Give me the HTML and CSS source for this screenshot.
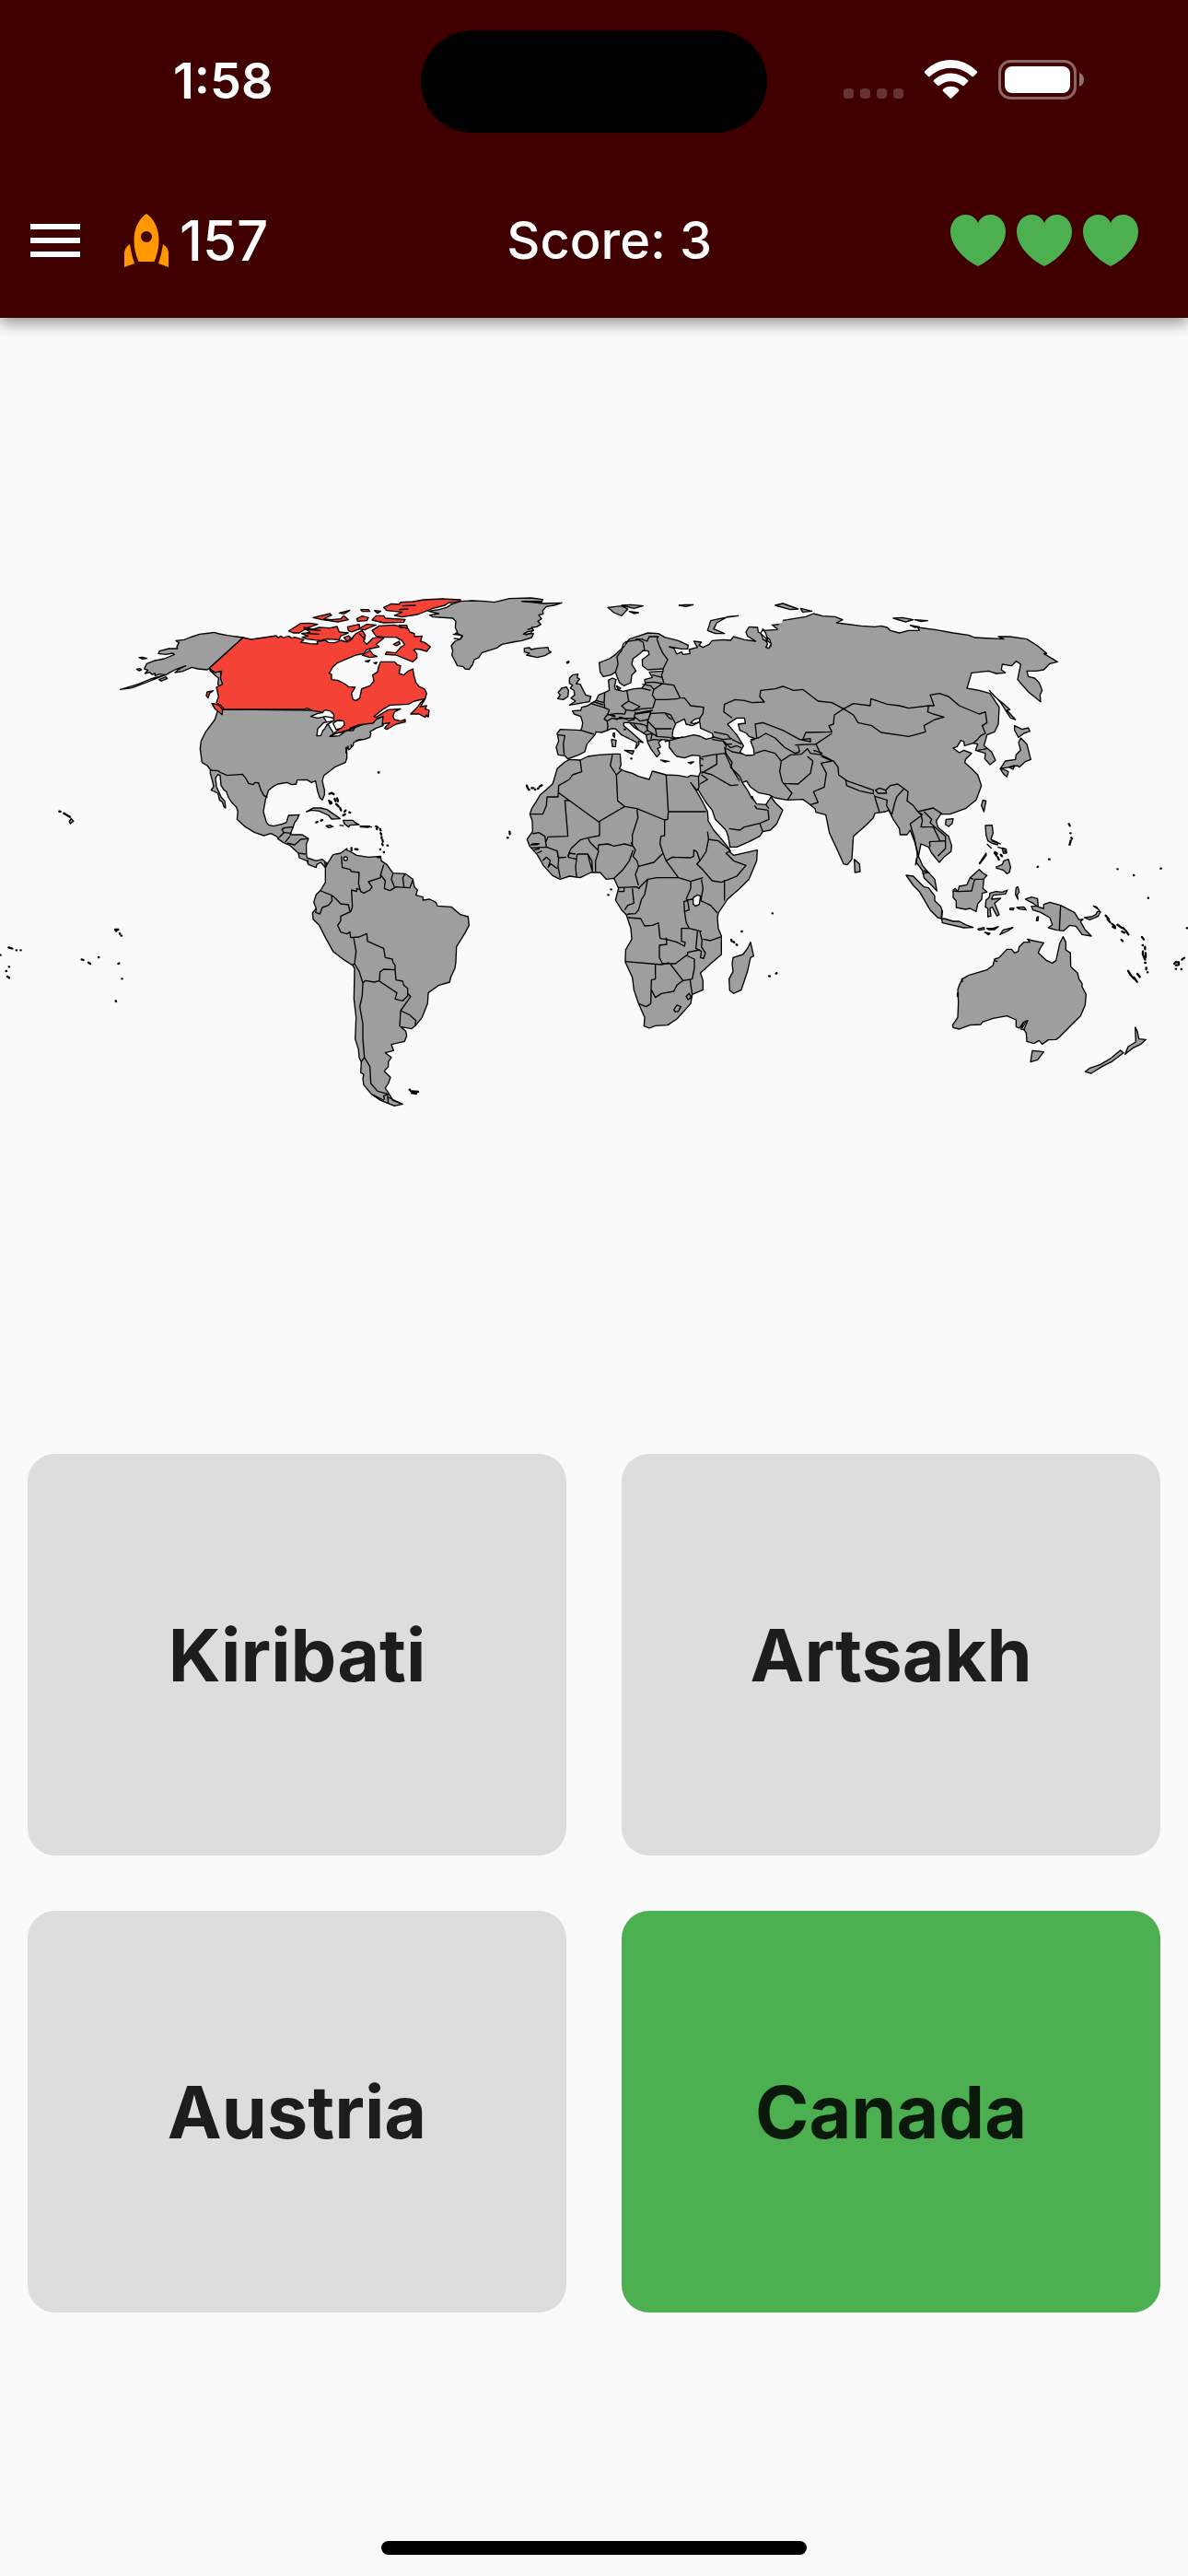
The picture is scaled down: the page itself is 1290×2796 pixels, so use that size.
FILE: index.html
```html
<!DOCTYPE html>
<html lang="en">
<head>
    <meta charset="UTF-8">
    <meta name="viewport" content="width=device-width, initial-scale=1.0">
    <title>Country Quiz</title>
    <link rel="stylesheet" href="styles.css">
</head>
<body>
    <header class="header">
        <div class="status-bar">
            <div class="time">1:58</div>
            <div class="island"></div>
            <div class="status-icons">
                <svg width="262" height="44" viewBox="0 0 262 44">
                    <g fill="#fff" fill-opacity="0.2">
                        <rect x="0" y="31" width="11" height="11" rx="4"/>
                        <rect x="18" y="31" width="11" height="11" rx="4"/>
                        <rect x="36" y="31" width="11" height="11" rx="4"/>
                        <rect x="54" y="31" width="11" height="11" rx="4"/>
                    </g>
                    <g fill="#fff">
                        <path d="M88 12.500Q100.500 0 116.500 0T145 12.500Q145.500 13.300 145 14L141 18Q140 18.600 139.400 18Q129 8.800 116.500 8.800T93.600 18Q93 18.600 92 18L88 14Q87.500 13.300 88 12.500Z"/>
                        <path d="M98 22Q106 14.500 116.500 14.500T135 22Q135.600 23 135 23.700L130.700 28Q130 28.700 129.200 28Q123.500 23.300 116.500 23.300T103.800 28Q103 28.700 102.300 28L98 23.700Q97.400 23 98 22Z"/>
                        <path d="M108 32Q111.500 28.800 116.500 28.800T125 32Q125.800 33 125 34L117.300 41.600Q116.500 42.300 115.700 41.600L108 34Q107.200 33 108 32Z"/>
                    </g>
                    <rect x="169.500" y="1.500" width="82" height="40" rx="12" fill="none" stroke="#fff" stroke-opacity="0.4" stroke-width="3"/>
                    <rect x="175" y="7" width="71" height="29" rx="8" fill="#fff"/>
                    <path d="M256 14Q261 16 261 21.500T256 29Z" fill="#fff" fill-opacity="0.45"/>
                </svg>
            </div>
        </div>
        <div class="toolbar">
            <div class="toolbar-left">
                <button class="menu-button" aria-label="Menu">
                    <svg width="54" height="36" viewBox="0 0 54 36" fill="#fff">
                        <path d="M0 0H54V6H0ZM0 15H54V21H0ZM0 30H54V36H0Z"/>
                    </svg>
                </button>
                <svg class="rocket" width="48" height="58" viewBox="0 0 48 58" fill="#ff9800">
                    <path fill-rule="evenodd" d="M24 0C33 6 37.500 17 37.500 29C37.500 37 35.500 45 32.500 52H15.500C12.500 45 10.500 37 10.500 29C10.500 17 15 6 24 0ZM24 19A6 6 0 1 0 24 31A6 6 0 1 0 24 19Z"/>
                    <path d="M6 33Q7.500 44 11 54L0 58V42Q1 36 6 33ZM42 33Q40.500 44 37 54L48 58V42Q47 36 42 33Z"/>
                </svg>
                <span class="points">157</span>
            </div>
            <div class="score">Score: 3</div>
            <div class="hearts">
                <svg width="60" height="56" viewBox="0 0 60 56"><path d="M30 9C32 4 37 0 43.500 0C53 0 60 8 60 18C60 34 45 48 32 55Q30 56.500 28 55C15 48 0 34 0 18C0 8 7 0 16.500 0C23 0 28 4 30 9Z"/></svg>
                <svg width="60" height="56" viewBox="0 0 60 56"><path d="M30 9C32 4 37 0 43.500 0C53 0 60 8 60 18C60 34 45 48 32 55Q30 56.500 28 55C15 48 0 34 0 18C0 8 7 0 16.500 0C23 0 28 4 30 9Z"/></svg>
                <svg width="60" height="56" viewBox="0 0 60 56"><path d="M30 9C32 4 37 0 43.500 0C53 0 60 8 60 18C60 34 45 48 32 55Q30 56.500 28 55C15 48 0 34 0 18C0 8 7 0 16.500 0C23 0 28 4 30 9Z"/></svg>
            </div>
        </div>
    </header>

    <main class="map-container">
        <svg class="map" viewBox="0 644 1290 604" role="img" aria-label="World map">
            <!-- North America -->
            <g transform="translate(100 630) scale(0.33333)">
                <path class="land" d="M492 183L470 180 440 176 415 171 397 166 385 168 350 172 318 183 300 190 273 193 283 200 276 212 278 219 250 219 220 227 216 235 240 238 263 234 268 238 250 246 235 252 205 258 178 268 170 285 182 289 172 300 188 296 195 303 206 300 205 308 220 302 240 305 255 296 270 288 305 275 280 288 270 297 295 293 325 280 345 285 375 288 382 283Z"/>
                <path class="land" d="M240 304L190 318 150 335 92 352 130 347 175 330 215 314ZM218 320L240 311 245 316 225 325ZM153 248L165 247 178 251 165 253ZM145 286L155 284 161 288 152 291Z"/>
                <path class="land" d="M382 283L395 295 418 293 422 315 428 335 415 345 410 335 412 315 400 305 385 292Z"/>
                <path class="land" d="M408 425L400 450 370 490 355 520 352 545 358 590 375 600 385 612 385 625 392 650 396 668 388 680 410 690 415 712 424 718 430 735 435 738 432 715 420 702 415 690 405 668 402 640 410 629 417 632 420 665 430 680 437 684 445 705 455 720 470 735 475 750 472 775 500 800 530 818 560 828 582 821 600 830 610 840 630 825 620 805 655 800 660 785 668 775 675 760 640 762 633 785 620 790 590 797 575 793 568 785 558 750 565 710 575 680 590 668 605 660 635 655 650 662 665 660 668 647 700 646 715 655 728 650 735 685 742 705 750 712 757 695 757 680 750 650 755 632 775 617 790 605 825 590 830 575 830 560 828 540 838 548 850 535 852 525 870 515 885 515 905 508 908 495 905 490 925 478 948 470 948 440 900 460 790 500 740 420 430 417Z"/>
                <path class="line" d="M385 615L412 617 415 621 440 632 490 628 500 640 510 658 525 662 530 655 542 656 550 680 560 698 572 703M828 540L827 560M833 535L835 550M843 531L845 541M858 520L885 514"/>
                <path class="canada" d="M492 183L518 189 560 183 600 177 606 184 615 178 622 184 640 178 650 185 660 182 690 190 680 198 710 203 735 204 733 196 760 192 770 199 790 200 810 192 830 198 845 190 852 178 860 170 880 160 890 175 885 195 895 205 915 185 935 182 950 185 925 205 935 213 895 222 885 235 860 240 835 250 800 265 785 278 772 300 780 303 780 320 800 322 825 335 835 343 857 345 845 365 850 385 860 388 872 380 878 350 905 340 918 325 914 305 930 295 933 278 940 262 985 262 995 272 1005 275 1000 300 1015 305 1030 292 1045 285 1048 305 1055 330 1065 342 1082 350 1090 365 1085 382 1050 390 1030 400 970 403 950 415 918 440 925 442 945 430 965 418 1005 415 985 425 980 440 985 450 1005 455 1020 450 1020 458 990 465 960 482 953 478 970 460 945 465 948 440 930 445 915 462 870 467 840 478 850 484 820 487 795 503 775 505 800 485 820 468 818 455 800 452 790 458 785 445 745 425 720 422 700 413 690 417 430 417 420 405 405 395 412 375 405 345 425 335 418 315 422 292 400 297 382 283Z"/>
                <path class="canada" d="M1085 382L1070 395 1062 407 1038 432 1065 432 1085 443 1090 435 1095 442 1098 420 1085 415 1090 405 1070 408ZM390 397L412 402 425 418 424 434 400 415ZM375 360L395 356 383 364 378 380 372 372ZM690 150L720 156 740 150 775 152 798 147 805 165 835 168 810 178 805 190 760 188 745 193 700 188 684 182 704 178 682 170 710 166ZM640 162L680 137 710 136 735 140 700 152 675 168 655 168ZM720 118L775 105 780 110 755 122 780 125 810 122 820 112 835 125 800 132 750 125ZM805 103L840 94 820 106ZM875 92L900 92 905 98 880 98ZM920 95L940 97 930 104ZM862 122L880 113 900 118 895 128 865 130ZM925 112L950 112 955 120 1020 124 1015 133 950 135 912 126ZM950 85L975 73 1000 75 1005 68 1045 66 1080 60 1140 57 1200 60 1200 66 1160 70 1150 78 1110 88 1060 108 1010 116 985 111 1010 100 960 95ZM832 148L870 140 872 155 845 165 835 160ZM868 155L895 140 925 142 905 150 888 158ZM912 160L935 145 985 142 1030 155 1035 165 1050 170 1050 180 1075 178 1070 195 1085 200 1102 213 1090 228 1070 222 1055 220 1048 224 1058 235 1058 250 1045 262 1015 250 990 240 955 238 960 230 990 233 1005 215 1018 207 1010 193 990 182 955 182 925 178ZM880 240L905 225 915 238 928 245 905 248ZM890 260L905 257 900 263ZM918 265L928 264 924 269ZM1000 143L1025 143 1028 152 1003 150ZM820 183L835 177 845 185 830 195ZM982 205L1000 195 1003 203 992 210Z"/>
                <path class="line" d="M690 156L745 160M1010 80L1055 78M1000 92L1030 90M870 170L890 190M700 170L740 172"/>
                <path class="sea" d="M712 440L735 430 750 428 758 419 775 422 787 432 788 445 760 440 735 445ZM732 503L735 480 755 460 785 455 765 467 758 480 752 485 745 503ZM785 462L800 453 820 455 822 468 812 478 795 483ZM775 505L795 495 825 489 805 503ZM830 485L855 478 850 486Z"/>
                <path class="land" d="M698 750L720 738 745 738 765 743 790 760 808 773 780 774 770 762 740 748 715 745ZM818 778L850 778 855 784 870 792 840 794 836 800 822 790ZM762 796L775 794 785 799 770 802ZM806 794L820 796M873 797L905 797 900 801 875 800ZM912 800l-8 0"/>
                <path class="dots" d="M773 692l8-3 6 4M772 714l4 10M778 718l2 4M790 708l3 8M795 725l8 8M798 706l3 10M808 738l3 8M818 762l6-4M822 750l4-4M838 752l3 1M730 785l4-2M746 779l4-2M925 798l6 3M927 806l1 1M938 806l2 5M940 820l2 4M943 832l0 4M946 842l1 6M945 855l2 4M962 860h1M938 873h1M950 882h1M933 622h1"/>
            </g>

            <!-- Greenland and Iceland -->
            <g transform="translate(300 630) scale(0.33333)">
                <path class="land" d="M495 97L530 92 555 85 570 75 600 65 640 63 680 65 710 68 760 56 830 54 868 59 865 66 800 65 870 72 930 70 905 78 880 82 868 95 870 105 855 110 864 122 852 130 862 140 848 148 832 150 838 160 815 165 805 172 838 170 832 183 800 193 770 198 735 205 718 217 670 232 660 248 645 255 640 270 628 287 615 285 608 277 590 275 585 265 572 240 575 225 570 210 582 195 600 188 607 178 590 170 580 173 590 165 583 150 585 130 575 120 510 116 500 110 530 105Z"/>
                <path class="line" d="M575 172L605 176 600 188 578 186M800 65L865 67M812 175L830 168 836 158M818 157L835 152"/>
                <path class="land" d="M808 218L825 216 830 222 850 218 885 215 888 226 895 230 875 242 850 248 815 240 825 234 808 230Z"/>
                <path class="dots" d="M948 264l4-2M333 622h1"/>
            </g>

            <!-- Europe and Asia -->
            <g transform="translate(560 640) scale(0.33333)">
                <path class="land" d="M870 98L885 108 835 112 855 127 805 130 810 145 828 160 832 180 820 188 822 170 805 158 800 140 790 135 788 120 760 118 750 135 755 148 782 165 745 160 710 150 700 162 675 160 640 163 630 175 610 185 597 178 605 168 580 165 592 185 565 192 568 205 545 208 540 200 525 207 515 188 500 183 540 190 560 190 562 178 530 163 485 152 465 140 430 138 400 148 370 158 355 180 325 208 305 222 272 235 275 265 285 280 310 275 325 265 330 280 338 300 352 310 375 300 378 275 392 262 378 240 382 222 405 205 415 195 432 197 435 208 412 225 413 245 430 258 480 255 480 262 435 265 445 283 420 290 422 305 410 318 385 320 350 328 325 322 322 310 327 290 315 285 302 292 305 325 290 332 270 340 262 358 245 368 235 375 215 380 212 390 185 392 190 402 212 410 218 430 216 445 212 455 145 452 135 465 140 490 132 510 138 535 160 538 170 548 205 535 225 525 232 500 258 470 262 460 280 462 300 455 310 450 325 450 345 470 395 495 390 515 402 500 400 490 415 495 395 478 375 460 352 440 352 430 370 430 385 445 425 470 430 495 440 515 460 542 470 530 462 515 472 510 465 495 475 485 500 488 500 510 515 530 525 540 550 545 575 536 600 538 600 560 602 590 592 615 592 645 620 690 640 715 650 745 685 780"/>
                <path class="fill" d="M860 105L878 105 698 770 680 770Z"/>
                <path class="land" d="M175 285L185 275 203 272 200 283 208 288 197 303 210 305 220 325 228 340 245 345 240 362 205 368 175 373 195 360 180 350 192 340 190 325 178 318 185 308 175 302ZM150 318L165 314 172 325 170 345 155 355 137 352 145 340 138 332ZM300 55L345 50 365 60 345 82 320 72ZM345 48L375 46 415 50 385 58ZM370 68L400 72 385 75ZM532 48L555 46 578 46 555 52ZM725 82L690 85 655 105 645 125 680 140 650 140 625 130 635 98 680 88ZM312 485L327 487 325 508 315 508ZM318 464L322 464 322 478 317 473ZM355 520L385 522 380 533ZM472 552L500 556 485 558ZM562 560L580 558 570 564ZM328 310L342 318 335 324Z"/>
                <path class="sea" d="M510 475L512 455 522 432 550 418 555 435 575 440 600 428 602 448 640 465 645 478 620 484 600 474 580 470 545 478 520 480ZM570 430L585 418 600 415 598 428 580 433Z"/>
                <path class="line" d="M325 265L333 240 330 215 345 195 350 175 360 166 400 160 415 168 420 195M390 158L410 158 428 165 435 150 465 150 460 158 470 185 480 205 495 225 480 255M480 262L475 275 482 300M445 275L478 283M422 300L450 298 478 303M412 305L440 310 450 322 478 303 515 308 535 348M410 318L440 325M455 355L490 355 530 352M450 322L445 340 455 355 447 382M362 325L368 360 345 375 358 388 382 392 405 378 368 360M382 392L410 385 447 382M447 390L420 394 390 400M300 405L330 400 355 402 360 388M325 417L385 415 390 395M390 402L440 395 432 420 405 425 388 412M530 350L550 350 570 375 612 380 610 400 600 415M440 400L485 398 505 405 520 432M485 398L500 415 510 420M440 400L430 425 455 450 508 450M455 450L460 475 500 478M245 368L285 380 305 388 300 402 288 418 298 425 300 442 298 455M262 358L288 365 290 380M290 332L288 365M254 362L285 372M212 455L255 468M138 470L160 472 155 500 158 535M298 425L315 415 330 420 340 412 365 420M365 425L385 420 390 412M370 430L410 435 425 440 430 455 415 465M385 435L400 455M430 425L428 455 445 465 440 485M425 470L445 465 460 475M430 490L450 485 475 487M485 492L515 485 545 476M500 478L520 483M640 485L675 490 685 505 682 530M605 542L640 535 682 530M645 460L690 470 702 485M640 475L675 485 705 482M675 488L700 512M680 500L705 500M705 485L735 500M700 512L720 505 740 515M655 535L655 565 605 595M682 530L705 580 735 630M605 590L640 600 700 635 738 632M600 630L625 615 605 600M600 545L612 550M600 568L610 570M688 515L705 525 760 535"/>
                <path class="dots" d="M168 235l3-2M376 547h1M36 635l3 8M42 648h2M52 643l6 0M63 648h1M72 645l2-1M78 638l7-4M310 405l12 4M355 452h1M770 672l3 10M762 678h1"/>
            </g>
            <g transform="translate(780 640) scale(0.33333)">
                <path class="land" d="M25 780L32 800 38 835 60 835 100 818 135 800 145 785 170 780 190 760 210 715 185 690 172 672 155 697 125 695 118 685 108 675 95 650 78 625 92 620 105 640 130 658 165 665 185 675 225 682 275 680 290 690 315 710 318 722 350 730 355 755 362 790 390 850 408 890 420 893 435 875 440 800 480 765 505 740 510 725 545 720 555 715 570 745 590 775 592 795 615 795 625 780 640 820 650 855 645 885 665 912 670 935 695 960 712 978 705 940 682 915 665 895 652 865 660 825 685 835 695 855 720 885 735 868 758 850 760 830 750 800 715 770 710 750 725 728 755 728 805 710 840 682 850 655 857 635 845 600 825 580 803 560 805 550 825 530 800 520 785 528 765 513 778 508 790 488 800 492 802 505 830 497 845 500 838 520 870 530 868 548 885 567 903 553 890 525 865 505 870 490 875 470 900 460 912 435 915 380 885 335 850 325 810 318 825 268 880 262 905 270 935 268 922 258 925 240 955 245 970 230 985 240 975 290 1010 330 1050 362 1048 340 1055 325 1045 300 1030 285 1010 280 1005 262 1035 262 1060 258 1080 238 1105 232 1060 205 1070 205 1040 180 1005 158 950 150 912 150 930 158 835 153 815 145 765 138 710 128 650 120 655 130 620 130 590 138 560 130 550 120 530 115 510 118 465 115 385 105 405 95 380 85 340 83 310 75 285 85 225 95 210 97"/>
                <path class="land" d="M185 48L210 42 260 60 235 62ZM268 58L305 67 275 70ZM570 90L600 88 635 95 610 102ZM640 95L682 98 660 101ZM625 113L655 118 640 120ZM965 440L990 452 1010 447 1015 458 995 465 978 478 965 455ZM985 480L1005 500 1018 550 1000 557 980 575 975 570 950 575 930 578 920 578 935 555 968 550 970 535 985 520 978 495ZM918 580L930 582 945 590 940 607 930 598ZM946 575L965 570 960 582ZM883 325L900 345 930 370 950 388 940 390 968 420 952 415 920 365ZM862 682L872 685 865 720 857 700ZM742 745L765 743 762 758 750 768 740 762ZM443 875L460 890 462 915 445 918Z"/>
                <path class="sea" d="M30 435L45 425 60 415 85 415 88 432 65 435 70 455 92 465 100 475 120 482 105 490 115 515 117 535 90 537 70 527 82 505 60 470ZM145 125L155 140 162 165 172 172 165 188 155 185 160 175 155 155 138 140Z"/>
                <path class="line" d="M20 510L25 530 45 560 40 575 70 605 78 625M120 530L150 520 185 530 205 555 200 590 208 622 240 660 225 682M210 628L260 630 300 595 308 555 290 540M205 555L235 535 270 533 290 515 300 530 340 535M335 540L370 555 335 562 352 595 345 640 310 655 325 690 300 697M45 415L18 395 20 370 55 355 85 358 110 365 150 363 135 345 138 325 185 320 210 312 245 325 275 322 325 360 370 365 408 385 378 405 375 435 360 440 370 460 285 462 275 485M125 478L120 435 145 430 210 455 265 485 300 492 300 482 270 485M105 485L130 480 155 465 185 480 215 510 250 530 265 525M370 465L318 500 335 535 375 555 390 575 392 600 420 620 505 650M250 503L320 500M265 525L260 505M310 520L340 530M415 618L418 635 460 652 505 662 505 648M512 650L525 643 545 650 548 660 520 660ZM508 665L515 690 525 722M510 670L550 682 548 700 565 730M545 650L560 635 585 630 605 645 582 670 575 690 565 730M605 645L618 655 615 685 635 700 650 720 660 730M650 720L665 730 625 760 640 810 650 870M660 730L665 750 660 770 700 770 715 800 722 815M650 720L700 708 730 728M670 720L695 745 690 755 705 770 740 800 740 840 715 865M690 835L688 818 738 815M668 912L685 918M408 385L440 368 495 375 497 352 550 370 590 375 620 383 685 375 682 395 700 402 735 412 705 420 670 440 675 460 640 470 620 475 530 462 500 440 455 430 440 405ZM685 375L703 375 690 340 720 335 750 345 785 375 850 402 870 395 875 430 860 440 870 465 855 472 842 487 830 497M845 520L875 515M35 775L70 780 85 770 135 758 165 745 162 715 125 710 118 700M135 758L145 785M155 697L165 710"/>
            </g>

            <!-- Africa -->
            <g transform="translate(550 790) scale(0.33333)">
                <path class="land" d="M205 100L190 108 165 130 155 165 150 180 110 215 98 235 82 260 76 278 84 300 85 335 67 360 75 382 100 410 112 430 120 445 150 478 175 490 205 480 240 485 275 468 305 468 325 490 350 487 365 520 355 558 375 590 390 605 405 650 408 685 388 720 387 760 410 810 415 850 430 895 450 940 448 968 465 975 485 967 525 965 555 945 600 895 605 865 640 850 640 820 632 795 665 765 700 735 700 675 690 650 687 615 690 600 720 555 760 520 790 490 815 430 817 395 740 412 728 402 725 390 705 365 675 330 657 300 655 270 640 240 620 205 600 175 615 195 622 200 627 190 625 155 600 152 590 158 560 152 520 150 475 138 465 165 430 155 410 145 385 138 368 130 373 118 370 82 350 82 300 85 265 90 240 102Z"/>
                <path class="land" d="M795 695L805 740 795 745 785 790 765 850 740 862 727 852 725 815 738 790 735 765 738 745 770 735 785 715Z"/>
                <path class="sea" d="M608 550L622 541 632 545 628 572 615 578 608 570Z"/>
                <path class="line" d="M240 102L245 140 215 150 205 165 170 185 168 222 132 222 130 250 118 278 78 278M168 207L300 303 385 253M190 233L207 235M190 233L200 350 135 352 128 370M345 85L338 120 358 150 375 135M358 150L362 235 385 253 425 260 515 297M520 150L527 270 650 270M527 270L525 295 515 297M303 303L303 348 265 355 240 362 210 390 200 415M265 355L272 370 298 395 300 378 330 375 350 382 385 375 410 382M425 260L428 290 410 345 410 382M515 297L515 348 503 350 500 375 510 405 520 430 540 418 600 420 610 415 610 395 620 400 630 430M405 370L420 395 412 415 425 430 430 448 480 435 510 405M430 448L420 475 430 510M520 430L560 485 490 485 460 490 430 520M655 335L658 360 650 400 630 430 620 440 640 460 670 495M560 485L600 497 640 485M658 360L690 365 715 385M715 385L730 398 715 405 740 430 780 445 750 480 725 490 700 500 670 495M710 492L710 560M635 490L640 520 633 560 665 575 687 600M600 497L600 520 585 555M585 558L608 555M578 562L590 560 595 590 580 595ZM580 595L585 630 595 650M595 650L635 660M640 685L665 690 698 678M595 650L570 650 570 692 582 695 580 708 555 695 520 685 500 683M395 615L437 618 450 642 475 640 495 632 500 683M520 680L522 702 498 705 498 745 508 765 550 765 590 735 590 728 630 720M387 758L505 768 530 762M485 768L485 815 472 818 470 895 455 905 430 895M472 850L485 875 505 862 545 855 555 835 575 820 535 768M585 738L612 750 612 780 605 815 575 820M598 818L605 865M622 660L617 715 635 725 632 745 642 748 648 730 635 710 637 690 630 660M545 915L555 900 568 905 560 920 550 922ZM585 872L595 862 602 875 592 882ZM350 487L380 458 400 430 412 395M365 517L425 515 433 522M365 530L383 530 383 517M410 520L415 568 395 575 385 590M460 490L450 540 440 555 430 590 420 602 395 603M85 342L105 338 125 350 130 385 80 388M78 378L108 374M130 385L165 398 170 420 195 418M90 395L108 390M100 405L115 398M170 420L168 450 175 485M200 418L205 405 225 408M230 408L265 408 270 430 280 465M230 408L225 450 228 482M200 418L228 425M265 408L278 430 280 465M290 465L290 430 300 400 298 395M118 430L130 418 143 430 135 452M135 452L145 440 165 455M165 398L168 420M393 605L410 602"/>
                <path class="dots" d="M10 335l1 8M3 355l2 0M340 523h1M331 541h1M866 601h1M766 660h1M732 687l2 5M740 694l2 2M749 703l2 1M855 805l3 1M878 797l2-1M85 376l16 0"/>
            </g>

            <!-- Central and South America -->
            <g transform="translate(200 850) scale(0.33333)">
                <path class="land" d="M305 178L325 158 318 148 328 142 355 140 345 165 385 165 405 178 398 195 398 225 400 240 430 250 450 245 465 258 460 272 445 255 432 262 430 272 405 262 400 250 375 240 372 225 345 200 325 192Z"/>
                <path class="land" d="M465 262L485 230 510 225 530 210 530 215 545 222 562 232 600 238 640 235 642 250 660 262 680 290 720 292 745 310 750 335 760 345 755 362 778 368 778 378 800 375 820 385 825 397 870 400 900 425 925 432 928 460 915 485 887 530 885 580 882 600 868 630 865 645 830 655 795 680 793 715 775 760 755 785 740 797 705 790 722 805 725 820 718 838 675 848 682 868 655 875 675 890 665 905 665 920 652 935 672 955 665 975 655 990 665 1005 680 1030 712 1042 685 1048 640 1030 610 1010 585 980 582 960 585 945 575 940 577 905 570 890 568 865 557 830 560 760 553 700 555 600 548 590 520 572 485 545 460 500 440 460 420 440 418 420 430 405 422 385 430 360 445 345 460 320 460 272Z"/>
                <path class="line" d="M328 190L345 170M335 192L360 198 380 180 403 178M372 225L395 228M403 260L403 247M458 255L460 270M325 158L350 160M512 235L515 272 540 278 545 285 570 288 568 325 575 350 585 355 605 345 612 335 600 318 640 305 640 295 650 262M640 295L655 315 652 340 670 347 690 335 735 338 745 312M680 292L675 310 685 335M720 292L712 305 716 335M575 345L562 340 562 350 545 345 548 400 543 415 510 430 510 445 500 460 510 482 530 488 540 482 542 500M445 348L480 362 482 380 470 395 450 402 442 423 428 418 430 405M480 362L490 370 510 390 535 393 540 415M542 500L570 498 595 487 597 512 650 535 655 565 678 570 680 580 687 590 687 605 650 603 638 612 636 640 620 645 590 640 582 648 570 610 555 585 560 545 552 500M687 605L690 638 712 642 715 655 728 665 728 690 712 706 687 700 693 680 636 642M728 682L738 692 705 738 735 752 755 770 752 785M705 738L702 790M582 648L580 690 572 725 582 780 582 830 587 890 605 920 608 975 630 1000 665 1010 650 1015 652 1028M615 1012L650 1030M662 1010L665 1040M665 1020L705 1040M548 590L556 585M577 905L587 890"/>
                <circle class="sea" cx="526" cy="243" r="6"/>
                <path class="dots" d="M734 995h1M738 1000l24 2M742 1006l14 2M545 208v8M557 212l8 1M630 238l8 0"/>
            </g>

            <!-- Indonesia, Australia and New Zealand -->
            <g transform="translate(920 860) scale(0.33333)">
                <path class="land" d="M192 267L215 270 250 305 265 308 285 335 285 350 305 370 310 385 308 408 295 405 270 380 235 320 215 300ZM308 410L315 408 345 417 365 417 385 428 410 437 380 438 310 422ZM425 442L445 437 447 443 430 446ZM455 440L475 440 492 434 480 444 460 444ZM448 453L465 456 460 461ZM497 460L508 445 540 437 520 450ZM345 315L352 310 360 320 365 303 390 298 400 275 412 265 430 248 440 258 455 268 445 278 442 310 455 322 440 325 438 345 425 360 420 385 400 375 385 378 355 372 355 350 345 340ZM452 348L462 340 465 325 485 320 505 322 522 315 515 328 475 332 470 345 500 342 480 358 495 395 488 400 472 370 465 375 468 400 458 402 458 375 450 370ZM550 308L556 305 560 322 554 330 556 345 548 330ZM530 375L543 374 540 380 530 379ZM552 372L575 370 583 380 560 377ZM618 403L623 402 621 415 616 415ZM580 345L600 338 620 343 622 370 640 375 640 362 660 355 695 365 740 388 755 412 768 410 760 418 775 445 795 465 765 460 745 433 725 430 705 448 680 445 655 438 668 428 660 405 630 388 605 380 600 368 618 368 605 358ZM772 405L795 402 810 395 815 385 825 385 818 400 790 412ZM802 367L812 370 825 388 818 378ZM450 105L472 104 475 130 468 150 490 160 490 168 470 162 458 155 452 135ZM480 190L490 195 485 205ZM505 178L518 182 518 195 508 195ZM485 240L505 232 510 220 525 215 532 240 528 258 520 262 508 250 487 244ZM452 195L453 202 432 230 430 228ZM455 165L470 180"/>
                <path class="land" d="M343 755L360 730 362 680 360 640 365 625 375 605 395 593 455 575 475 560 480 540 495 535 520 508 535 508 545 520 557 515 560 500 575 485 595 485 587 475 605 480 640 487 630 502 622 520 650 545 668 553 680 545 692 490 703 467 712 485 712 510 727 520 728 565 750 585 755 605 765 620 765 630 778 655 775 690 760 725 740 745 690 795 680 802 655 803 635 817 625 805 608 815 585 808 583 780 575 770 588 740 575 745 560 765 550 760 550 738 520 725 475 733 440 745 435 753 400 755 365 768 345 763ZM603 838L640 842 620 868 597 875ZM938 762L945 775 950 800 973 802 955 818 930 830 905 850 915 825 940 810ZM890 837L900 845 860 875 830 890 795 912 775 907 790 895 825 883 860 862Z"/>
                <path class="line" d="M695 365L691 445M345 318L365 320 405 318 415 280 442 280M400 275L410 280M470 155L500 165M245 262L262 258M575 745L565 768 580 770M583 742L570 765M478 545L490 548M372 603L376 615M490 175L512 182M308 380L306 410M222 235L226 210"/>
                <path class="dots" d="M722 100l3 6M727 130h1M730 145l2 3M728 154l-2 8M724 167h1M657 215h2M620 240l1-1M880 247h1M933 267h1M1021 245h1M980 341h1M1106 439h2M842 398l10 12M848 410l8 10M862 425l10 8M865 435l8 4M880 428l14 10M898 438l6 6M895 450l8 4M908 448l8 12M893 477l4 4M960 468l6 8M962 495h1M970 500v8M963 515v10M965 530l5 12M972 520v15M970 552h2M974 568v6M978 583h1M915 578l8 14M922 590l12 14M934 600l10 14M945 588l8 10M1065 555l6-6M1073 550l7 0 0 8M1070 560l6 0M1090 542l8-6M1070 572h1M1088 573h1M490 208l4 8M500 200l4 5M514 188l4 4M480 195l4 4M360 652l0 8"/>
            </g>

            <!-- Pacific islands -->
            <g transform="translate(0 860) scale(0.33333)">
                <path class="land" d="M232 82L240 91 229 99 226 92Z"/>
                <path class="dots" d="M193 59l4 1M208 65l6 4M218 71l10 6M375 444l10 0M378 449h1M390 456l1 2M395 464h1M28 502l12 4M53 511h1M67 511h1M1 527h1M29 565h1M20 579h1M24 597l6 4M266 541l6 2M288 551l6 4M321 534h1M385 555l3-1M397 604h1M377 676l1 2"/>
            </g>
        </svg>
    </main>

    <section class="answers">
        <button class="answer">Kiribati</button>
        <button class="answer">Artsakh</button>
        <button class="answer">Austria</button>
        <button class="answer correct">Canada</button>
    </section>

    <footer class="home-bar"><div class="home-indicator"></div></footer>
</body>
</html>
```
FILE: styles.css
```css
* {
    box-sizing: border-box;
}

body {
    font-family: Inter, "Liberation Sans", sans-serif;
    background-color: #fafafa;
    color: #1d1d1d;
    margin: 0;
    min-height: 100vh;
    display: flex;
    flex-direction: column;
}

svg {
    display: block;
}

.header {
    background-color: #400000;
    color: white;
    box-shadow: 0 6px 15px rgba(0, 0, 0, 0.4);
}

.status-bar {
    height: 177px;
    padding: 33px 112px 0;
    display: grid;
    grid-template-columns: 1fr 376px 1fr;
    align-items: start;
}

.time {
    font-size: 54px;
    line-height: 64px;
    font-weight: 600;
    padding: 23px 0 0 76px;
}

.island {
    height: 111px;
    border-radius: 56px;
    background-color: black;
}

.status-icons {
    padding-top: 32px;
    display: flex;
    justify-content: flex-end;
}

.toolbar {
    height: 168px;
    padding: 0 54px 0 33px;
    display: flex;
    justify-content: space-between;
    align-items: center;
    line-height: 72px;
    font-weight: 500;
}

.toolbar-left {
    display: flex;
    align-items: center;
}

.menu-button {
    padding: 0;
    border: none;
    background: none;
    cursor: pointer;
}

.rocket {
    margin-left: 48px;
}

.points {
    margin-left: 12px;
    font-size: 60px;
}

.score {
    font-size: 56px;
}

.hearts {
    display: flex;
    gap: 12px;
    fill: #4caf50;
}

.map-container {
    flex: 1;
    display: flex;
    align-items: center;
}

.map {
    width: 100%;
}

.land, .canada, .line, .sea, .dots {
    stroke: black;
    stroke-width: 4;
    stroke-linejoin: round;
}

.land, .fill {
    fill: #9e9e9e;
}

.canada {
    fill: #f44336;
}

.sea {
    fill: #fafafa;
}

.line, .dots {
    fill: none;
}

.dots {
    stroke-width: 7;
    stroke-linecap: round;
}

.answers {
    display: grid;
    grid-template-columns: 1fr 1fr;
    gap: 60px;
    padding: 30px;
}

.answer {
    height: 436px;
    border: none;
    border-radius: 30px;
    background-color: #dddddd;
    color: #1d1d1d;
    font-family: inherit;
    font-size: 79px;
    font-weight: 700;
    cursor: pointer;
}

.correct {
    background-color: #4caf50;
    color: #0b190c;
}

.home-bar {
    height: 256px;
    padding-bottom: 23px;
    display: flex;
    align-items: flex-end;
    justify-content: center;
}

.home-indicator {
    width: 462px;
    height: 15px;
    border-radius: 8px;
    background-color: black;
}
```
